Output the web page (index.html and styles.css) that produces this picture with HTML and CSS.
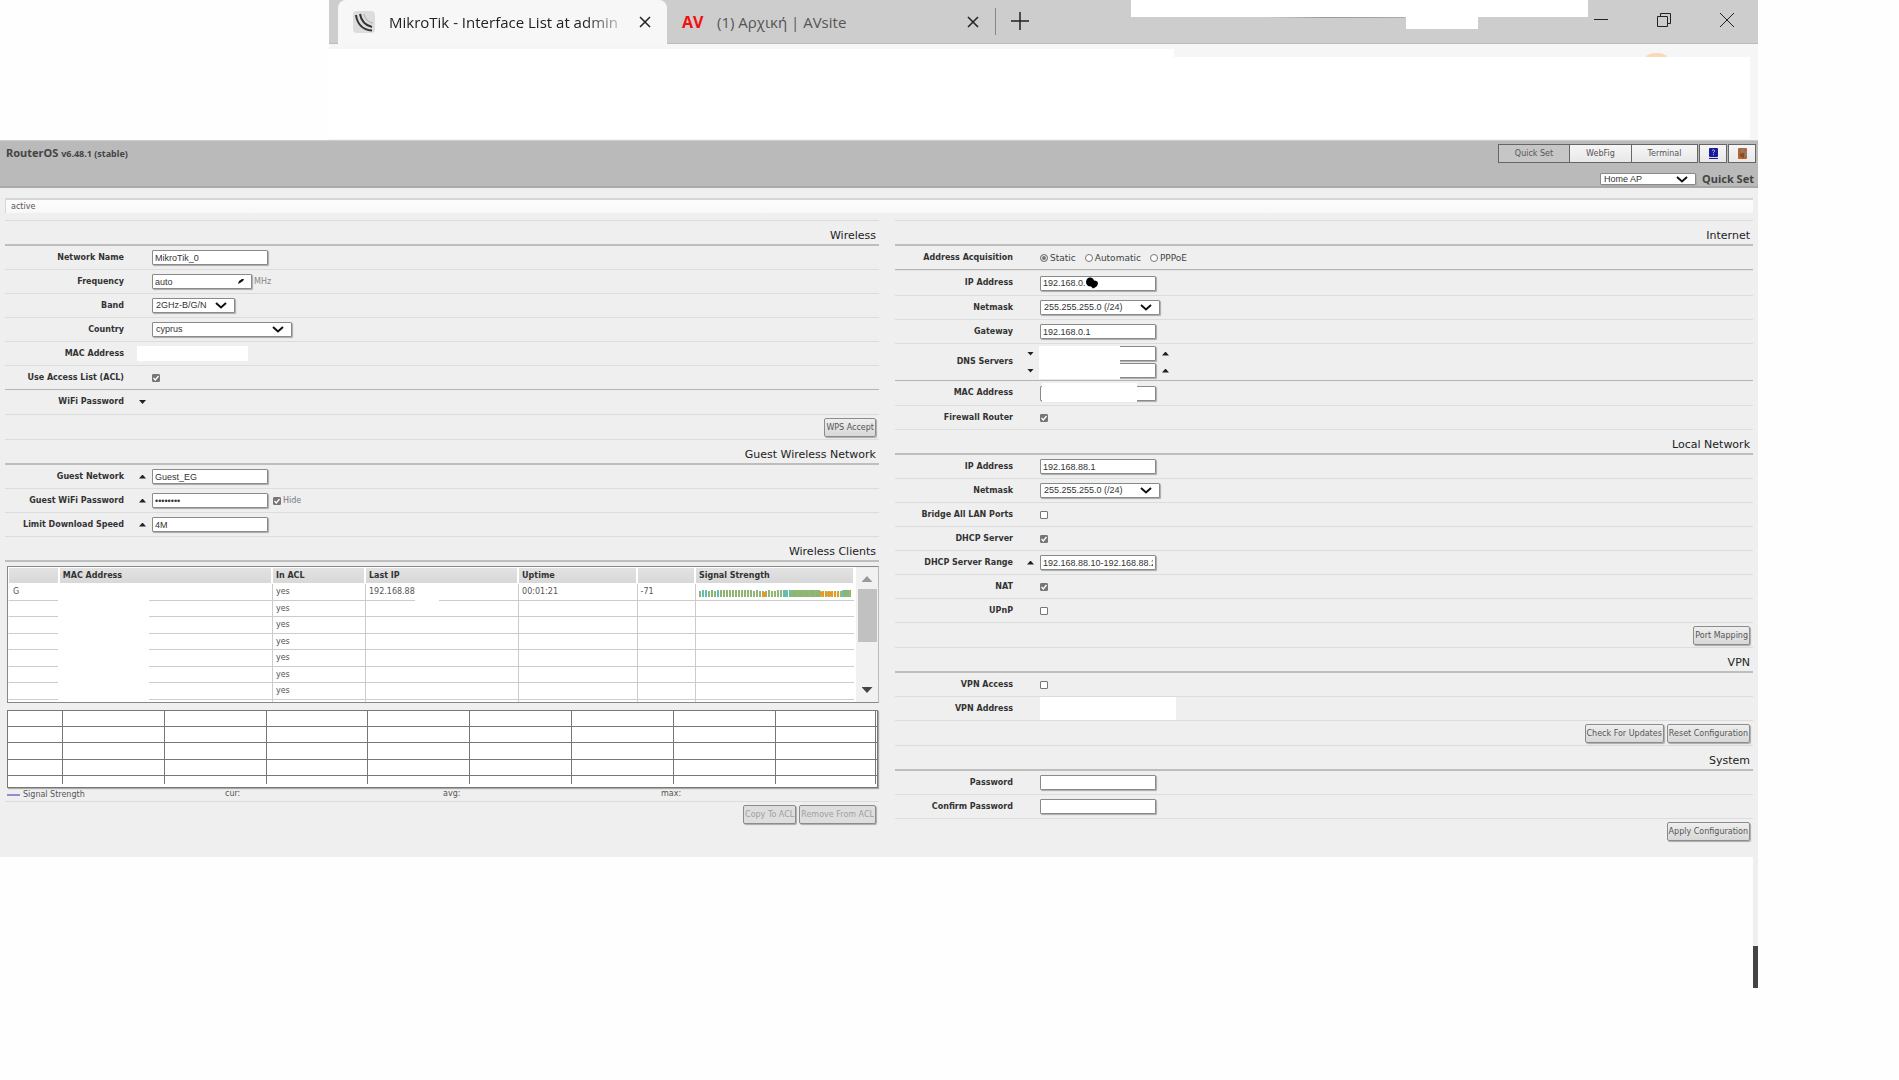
FILE: index.html
```html
<!DOCTYPE html>
<html lang="en">
<head>
<meta charset="utf-8">
<title>MikroTik - Interface List</title>
<link rel="stylesheet" href="styles.css">
</head>
<body>
<div class="window">
  <header class="titlebar">
    <div class="tab tab-active">
      <svg class="favicon" viewBox="0 0 22 22" aria-hidden="true"><rect width="22" height="22" rx="4" fill="#dcdcdc"/><path d="M3 4C4 12 9 19 19 19.500M7 3C8 9 11 14 19 16" fill="none" stroke="#333" stroke-width="2"/><path d="M11 3C12 8 15 11 20 12" fill="none" stroke="#aaa" stroke-width="1"/></svg>
      <span class="tab-title tab-fade">MikroTik - Interface List at admin</span>
      <button class="icon-button" aria-label="Close tab"><svg viewBox="0 0 12 12" class="cross"><path d="M1 1L11 11M11 1L1 11"/></svg></button>
    </div>
    <div class="tab tab-second">
      <span class="av-logo">AV</span>
      <span class="tab-title">(1) Αρχική | AVsite</span>
      <button class="icon-button" aria-label="Close tab"><svg viewBox="0 0 12 12" class="cross"><path d="M1 1L11 11M11 1L1 11"/></svg></button>
    </div>
    <button class="icon-button new-tab" aria-label="New tab"><svg viewBox="0 0 18 18" class="plus"><path d="M9 0V18M0 9H18"/></svg></button>
    <div class="window-controls">
      <button class="icon-button" aria-label="Minimize"><svg viewBox="0 0 14 14" class="control"><path d="M0 6.5H14"/></svg></button>
      <button class="icon-button" aria-label="Restore"><svg viewBox="0 0 14 14" class="control"><path d="M.5 3.5H10.500V13.500H.5ZM3.500 3.500V.5H13.500V10.500H10.500"/></svg></button>
      <button class="icon-button" aria-label="Close"><svg viewBox="0 0 14 14" class="control"><path d="M0 0L14 14M14 0L0 14"/></svg></button>
    </div>
    <div class="mask mask-title"></div>
    <div class="mask mask-title-small"></div>
  </header>
  <div class="toolbar">
    <div class="toolbar-blank"></div>
    <div class="toolbar-low"></div>
    <div class="profile-dot"></div>
  </div>

  <div class="app">
    <header class="app-header">
      <h1 class="brand">RouterOS <span class="version">v6.48.1 (stable)</span></h1>
      <div class="header-side">
        <nav class="nav">
          <button class="nav-button nav-current">Quick Set</button>
          <button class="nav-button nav-webfig">WebFig</button>
          <button class="nav-button nav-terminal">Terminal</button>
          <button class="nav-icon" aria-label="Manual"><svg viewBox="0 0 11 11" class="nav-svg"><rect x="1" width="9" height="9" rx="1" fill="#1a1a9c"/><rect x="1" y="9" width="9" height="1" fill="#ddd"/><rect x="1" y="10" width="9" height="1" fill="#1a1a9c"/><path d="M4 2.500Q5.500 1 6.500 2.500Q7 3.500 5.500 4.500V5.200M5.500 6.300V7.200" fill="none" stroke="#ccd" stroke-width="1"/></svg></button>
          <button class="nav-icon" aria-label="Log out"><svg viewBox="0 0 11 11" class="nav-svg"><rect x="1" width="9" height="11" rx="1" fill="#b5652f"/><path d="M4 1H7V4H4ZM8 3H10V8H8Z" fill="#7a8288"/><path d="M2 6L7 5V10L4 9" fill="#8d4a20"/></svg></button>
        </nav>
        <div class="mode">
          <select class="select select-mode" aria-label="Mode"><option>Home AP</option></select>
          <span class="mode-title">Quick Set</span>
        </div>
      </div>
    </header>

    <div class="status">active</div>

    <main class="columns">
      <div class="column column-left">
        <section>
          <h2 class="heading">Wireless</h2>
          <div class="row"><label class="label" for="name">Network Name</label><span class="slot"></span><div class="field"><input class="input" id="name" value="MikroTik_0"></div></div>
          <div class="row"><label class="label" for="freq">Frequency</label><span class="slot"></span><div class="field"><span class="over"><input class="input input-freq" id="freq" value="auto"><svg class="scribble" viewBox="0 0 6 5"><path d="M0 5L1 2L4 0H6L5 2L2 4Z"/></svg></span><span class="unit">MHz</span></div></div>
          <div class="row"><label class="label" for="band">Band</label><span class="slot"></span><div class="field"><select class="select select-band" id="band"><option>2GHz-B/G/N</option></select></div></div>
          <div class="row"><label class="label" for="country">Country</label><span class="slot"></span><div class="field"><select class="select select-country" id="country"><option>cyprus</option></select></div></div>
          <div class="row"><span class="label">MAC Address</span><div class="blank-mac"></div></div>
          <div class="row row-divider"><label class="label" for="acl">Use Access List (ACL)</label><span class="slot"></span><div class="field"><input type="checkbox" class="check" id="acl" checked></div></div>
          <div class="row row-tall"><span class="label">WiFi Password</span><button class="slot arrow-down" aria-label="Expand"></button></div>
          <div class="actions"><button class="button">WPS Accept</button></div>
        </section>
        <section>
          <h2 class="heading">Guest Wireless Network</h2>
          <div class="row"><label class="label" for="guest">Guest Network</label><button class="slot arrow-up" aria-label="Collapse"></button><div class="field"><input class="input" id="guest" value="Guest_EG"></div></div>
          <div class="row"><label class="label" for="gpass">Guest WiFi Password</label><button class="slot arrow-up" aria-label="Collapse"></button><div class="field"><input class="input" id="gpass" type="password" value="password"><label class="hide"><input type="checkbox" class="check" checked>Hide</label></div></div>
          <div class="row"><label class="label" for="limit">Limit Download Speed</label><button class="slot arrow-up" aria-label="Collapse"></button><div class="field"><input class="input" id="limit" value="4M"></div></div>
        </section>
        <section>
          <h2 class="heading">Wireless Clients</h2>
          <div class="clients">
            <table class="table">
              <colgroup><col class="c-flag"><col class="c-mac"><col class="c-acl"><col class="c-ip"><col class="c-up"><col class="c-dbm"><col class="c-sig"></colgroup>
              <thead><tr><th></th><th>MAC Address</th><th>In ACL</th><th>Last IP</th><th>Uptime</th><th></th><th>Signal Strength</th></tr></thead>
              <tbody>
                <tr><td>G</td><td class="masked"></td><td>yes</td><td class="ip">192.168.88</td><td>00:01:21</td><td>-71</td><td><svg class="signal" viewBox="0 0 152 7" preserveAspectRatio="none"><path d="M0 3.500H152" stroke="#8fb573" stroke-width="7" stroke-dasharray="2 1"/><path d="M92 3.500H121M145 3.500H152" stroke="#8fb573" stroke-width="7" stroke-dasharray="5 1"/><path d="M3 3.500H5M6 3.500H8M18 3.500H20M84 3.500H88M90 3.500H92M143 3.500H145" stroke="#5cc0b4" stroke-width="7"/><path d="M0 .5H2M9 .5H11M15 .5H17M54 .5H56M60 .5H68M72 .5H77M139 .5H143M121 .5H139" stroke="#fff" stroke-width="1"/><path d="M63 4.500H67M121 4H125M126 4.500H127M128 4H134M135 4H137M138 4.500H140" stroke="#ea9a22" stroke-width="5"/></svg></td></tr>
                <tr><td></td><td class="masked"></td><td>yes</td><td></td><td></td><td></td><td></td></tr>
                <tr><td></td><td class="masked"></td><td>yes</td><td></td><td></td><td></td><td></td></tr>
                <tr><td></td><td class="masked"></td><td>yes</td><td></td><td></td><td></td><td></td></tr>
                <tr><td></td><td class="masked"></td><td>yes</td><td></td><td></td><td></td><td></td></tr>
                <tr><td></td><td class="masked"></td><td>yes</td><td></td><td></td><td></td><td></td></tr>
                <tr><td></td><td class="masked"></td><td>yes</td><td></td><td></td><td></td><td></td></tr>
                <tr><td></td><td class="masked"></td><td></td><td></td><td></td><td></td><td></td></tr>
              </tbody>
            </table>
            <div class="scrollbar"><span class="scroll-up"></span><span class="thumb"></span><span class="scroll-down"></span></div>
          </div>
          <svg class="graph" aria-hidden="true">
            <g stroke="#777" stroke-width="1" shape-rendering="crispEdges">
              <path d="M0 15.500H3000M0 31.500H3000M0 48.500H3000M0 64.500H3000"/>
              <line x1="6.3%" x2="6.3%" y1="0" y2="73"/><line x1="18%" x2="18%" y1="0" y2="73"/><line x1="29.700%" x2="29.700%" y1="0" y2="73"/><line x1="41.400%" x2="41.400%" y1="0" y2="73"/><line x1="53.100%" x2="53.100%" y1="0" y2="73"/><line x1="64.800%" x2="64.800%" y1="0" y2="73"/><line x1="76.600%" x2="76.600%" y1="0" y2="73"/><line x1="88.300%" x2="88.300%" y1="0" y2="73"/><line x1="99.800%" x2="99.800%" y1="0" y2="73"/>
            </g>
          </svg>
          <div class="legend"><span class="legend-name"><i class="legend-line"></i>Signal Strength</span><span>cur:</span><span>avg:</span><span>max:</span></div>
          <div class="actions actions-plain"><button class="button" disabled>Copy To ACL</button><button class="button" disabled>Remove From ACL</button></div>
        </section>
      </div>

      <div class="column column-right">
        <section>
          <h2 class="heading">Internet</h2>
          <div class="row row-divider"><span class="label">Address Acquisition</span><span class="slot"></span><div class="field radios"><label class="radio-label"><input type="radio" class="radio" name="acq" checked>Static</label><label class="radio-label"><input type="radio" class="radio" name="acq">Automatic</label><label class="radio-label"><input type="radio" class="radio" name="acq">PPPoE</label></div></div>
          <div class="row row-first"><label class="label" for="wanip">IP Address</label><span class="slot"></span><div class="field"><span class="over"><input class="input" id="wanip" value="192.168.0."><svg class="blob" viewBox="0 0 12 11"><path d="M0 4Q1 0 4 0Q7 0 8 3Q12 3 12 6Q12 8 9 10L7 11L5 9Q0 9 0 4Z"/></svg></span></div></div>
          <div class="row"><label class="label" for="wanmask">Netmask</label><span class="slot"></span><div class="field"><select class="select select-mask" id="wanmask"><option>255.255.255.0 (/24)</option></select></div></div>
          <div class="row"><label class="label" for="gw">Gateway</label><span class="slot"></span><div class="field"><input class="input" id="gw" value="192.168.0.1"></div></div>
          <div class="row row-dns row-divider"><span class="label">DNS Servers</span>
            <div class="slots"><button class="slot arrow-down" aria-label="Remove"></button><button class="slot arrow-down" aria-label="Remove"></button></div>
            <div class="field"><div class="over dns"><input class="input" aria-label="DNS server 1"><input class="input" aria-label="DNS server 2"><div class="mask mask-dns"></div></div>
            <div class="slots slots-end"><button class="arrow-up" aria-label="Add"></button><button class="arrow-up" aria-label="Add"></button></div></div></div>
          <div class="row row-tall"><label class="label" for="wanmac">MAC Address</label><span class="slot"></span><div class="field"><span class="over"><input class="input" id="wanmac"><span class="mask mask-mac"></span></span></div></div>
          <div class="row"><label class="label" for="fw">Firewall Router</label><span class="slot"></span><div class="field"><input type="checkbox" class="check" id="fw" checked></div></div>
        </section>
        <section>
          <h2 class="heading">Local Network</h2>
          <div class="row"><label class="label" for="lanip">IP Address</label><span class="slot"></span><div class="field"><input class="input" id="lanip" value="192.168.88.1"></div></div>
          <div class="row"><label class="label" for="lanmask">Netmask</label><span class="slot"></span><div class="field"><select class="select select-mask" id="lanmask"><option>255.255.255.0 (/24)</option></select></div></div>
          <div class="row"><label class="label" for="bridge">Bridge All LAN Ports</label><span class="slot"></span><div class="field"><input type="checkbox" class="check" id="bridge"></div></div>
          <div class="row"><label class="label" for="dhcp">DHCP Server</label><span class="slot"></span><div class="field"><input type="checkbox" class="check" id="dhcp" checked></div></div>
          <div class="row"><label class="label" for="range">DHCP Server Range</label><button class="slot arrow-up" aria-label="Collapse"></button><div class="field"><input class="input" id="range" value="192.168.88.10-192.168.88.254"></div></div>
          <div class="row"><label class="label" for="nat">NAT</label><span class="slot"></span><div class="field"><input type="checkbox" class="check" id="nat" checked></div></div>
          <div class="row"><label class="label" for="upnp">UPnP</label><span class="slot"></span><div class="field"><input type="checkbox" class="check" id="upnp"></div></div>
          <div class="actions"><button class="button">Port Mapping</button></div>
        </section>
        <section>
          <h2 class="heading">VPN</h2>
          <div class="row"><label class="label" for="vpn">VPN Access</label><span class="slot"></span><div class="field"><input type="checkbox" class="check" id="vpn"></div></div>
          <div class="row"><span class="label">VPN Address</span><span class="slot"></span><div class="blank-vpn"></div></div>
          <div class="actions"><button class="button">Check For Updates</button><button class="button">Reset Configuration</button></div>
        </section>
        <section>
          <h2 class="heading">System</h2>
          <div class="row"><label class="label" for="pw">Password</label><span class="slot"></span><div class="field"><input type="password" class="input" id="pw"></div></div>
          <div class="row"><label class="label" for="pw2">Confirm Password</label><span class="slot"></span><div class="field"><input type="password" class="input" id="pw2"></div></div>
          <div class="actions actions-last"><button class="button">Apply Configuration</button></div>
        </section>
      </div>
    </main>
  </div>
  <footer class="below"><div class="rail"></div><div class="rail-dark"></div></footer>
</div>
</body>
</html>
```
FILE: styles.css
```css
* { box-sizing: border-box; }

body {
  margin: 0;
  background: #fefefe;
  color: #555;
  font: 8px/12px "DejaVu Sans", Verdana, sans-serif;
}

button, input, select { margin: 0; font-family: inherit; color: inherit; }

.window { margin-right: 141px; }

/* Browser frame */
.titlebar {
  position: relative;
  display: flex;
  height: 44px;
  margin-left: 329px;
  padding-left: 9px;
  background: #cdcdcd;
  border-bottom: 1px solid #bcbcbc;
}

.tab {
  display: flex;
  align-items: center;
  font: 15px/24px "Open Sans", "Noto Sans", sans-serif;
}

.tab-active {
  width: 329px;
  height: 44px;
  padding: 0 10px 0 15px;
  background: #f7f7f7;
  border-radius: 8px 8px 0 0;
  color: #222;
}

.tab-second {
  width: 329px;
  padding: 0 10px 0 15px;
  border-right: 1px solid #888;
  margin: 8px 0;
}

.tab-title { flex: 1; min-width: 0; white-space: nowrap; }
.tab-fade {
  -webkit-mask-image: linear-gradient(90deg, #000 80%, transparent);
  mask-image: linear-gradient(90deg, #000 80%, transparent);
}

.favicon { width: 22px; height: 22px; margin-right: 14px; }
.av-logo { width: 35px; color: #f01010; font: bold 16px/24px "Open Sans", sans-serif; }

.icon-button {
  display: grid;
  place-items: center;
  width: 24px;
  height: 24px;
  padding: 0;
  border: 0;
  background: none;
  color: #222;
}
.icon-button svg { fill: none; stroke: currentColor; stroke-width: 1; }
.icon-button .cross { width: 12px; height: 12px; stroke-width: 1.5; }
.icon-button .plus { width: 18px; height: 18px; stroke-width: 1.5; }
.icon-button .control { width: 14px; height: 14px; }
.new-tab { margin: 9px 12px; }
.window-controls { display: flex; gap: 39px; margin: 8px 19px 0 auto; }

.mask { position: absolute; background: #fff; }
.mask-title { top: 0; right: 170px; width: 457px; height: 17px; }
.mask-title::after {
  content: "";
  position: absolute;
  top: 100%;
  left: 30%;
  width: 30%;
  height: 1px;
  background: linear-gradient(90deg, #cdcdcd, #999 40%, #aaa);
}
.mask-title-small { top: 0; right: 280px; width: 72px; height: 29px; }

.toolbar {
  position: relative;
  display: flex;
  height: 96px;
  margin-left: 329px;
  padding: 5px 8px 1px 0;
  background: #f6f6f6;
}
.toolbar-blank { width: 59.5%; background: #fff; }
.toolbar-low { flex: 1; margin-top: 8px; background: #fff; }
.profile-dot {
  position: absolute;
  top: 9px;
  right: 91px;
  width: 21px;
  height: 4px;
  border-radius: 50% 50% 0 0 / 100% 100% 0 0;
  background: #fad9b8;
}

/* Router page */
.app { background: #efefef; }

.app-header {
  display: flex;
  justify-content: space-between;
  height: 48px;
  padding: 3px 2px 0 6px;
  background: #bababa;
  border-top: 1px solid #ccc;
  border-bottom: 2px solid #a9a9a9;
}
.brand { margin: 0; font: bold 11px/18px "Noto Sans", sans-serif; color: #444; }
.version { font-size: 9px; }

.header-side { display: flex; flex-direction: column; align-items: flex-end; gap: 9px; }
.nav { display: flex; }
.nav-button, .nav-icon {
  height: 19px;
  padding: 0;
  border: 1px solid #666;
  background: linear-gradient(#f6f6f6, #e8e8e8);
  font-size: 8px;
}
.nav-button { width: 67px; margin-left: -1px; }
.nav-current { width: 72px; background: #c6c6c6; }
.nav-webfig { width: 63px; }
.nav-icon { display: grid; place-items: center; width: 28px; margin-left: 1px; }
.nav-svg { width: 11px; height: 11px; }

.mode { display: flex; align-items: center; gap: 6px; height: 14px; padding-right: 2px; }
.mode-title { font: bold 11px/14px "Noto Sans", sans-serif; color: #444; }

.status {
  height: 15px;
  margin: 10px 5px 7px;
  padding-left: 5px;
  background: linear-gradient(#fdfdfd, #f7f7f7);
  border-top: 2px solid #d6d6d6;
  border-left: 1px solid #d6d6d6;
  line-height: 14px;
}

.columns {
  display: grid;
  grid-template-columns: 874fr 858fr;
  gap: 16px;
  padding: 0 5px;
}
.column { border-top: 1px solid #dcdcdc; min-width: 0; }

.heading {
  height: 25px;
  margin: 0;
  padding: 0 3px;
  border-bottom: 2px solid #bebebe;
  color: #222;
  font-size: 11px;
  font-weight: normal;
  line-height: 30px;
  text-align: right;
}

.row {
  display: grid;
  grid-template-columns: 119px 28px 1fr;
  align-items: center;
  height: 24px;
  border-bottom: 1px solid #dcdcdc;
}
.column-right .row { grid-template-columns: 118px 27px 1fr; }
.row-divider { border-color: #b4b4b4; }
.row-tall { height: 25px; }
.row-first { height: 26px; border-top: 1px solid #e4e4e4; }
.row-dns { height: 37px; }
.label { font-weight: bold; color: #333; text-align: right; white-space: nowrap; }
.field { display: flex; align-items: center; }
.over { position: relative; display: flex; }

.input, .select {
  width: 116px;
  height: 15px;
  padding: 0 2px;
  border: 1px solid #8a8a8a;
  border-radius: 1px;
  background-color: #fff;
  box-shadow: 1px 1px 1px #aaa;
  color: #333;
  font: 9px/13px "Liberation Sans", Arial, sans-serif;
}
.input-freq { width: 100px; }
.select {
  appearance: none;
  padding: 0 3px;
  background-image: url("data:image/svg+xml,%3Csvg xmlns='http://www.w3.org/2000/svg' width='12' height='7'%3E%3Cpath d='M1 1L6 5.5L11 1' fill='none' stroke='%23111' stroke-width='2'/%3E%3C/svg%3E");
  background-repeat: no-repeat;
  background-position: right 7px center;
}
.select-mode { width: 96px; height: 12px; line-height: 10px; }
.select-band { width: 83px; }
.select-country { width: 140px; }
.select-mask { width: 120px; }

.scribble { position: absolute; right: 8px; top: 5px; width: 6px; height: 5px; fill: #111; }
.blob { position: absolute; left: 46px; top: 1px; width: 12px; height: 12px; fill: #000; }
.unit { padding-left: 2px; color: #888; }
.hide { display: flex; align-items: center; gap: 2px; padding-left: 5px; color: #777; }

.check, .radio {
  appearance: none;
  width: 8px;
  height: 8px;
  border: 1px solid #767676;
  border-radius: 1px;
  background: #fff;
}
.check:checked {
  background: #767676 url("data:image/svg+xml,%3Csvg xmlns='http://www.w3.org/2000/svg' viewBox='0 0 6 6'%3E%3Cpath d='M.5 3L2.300 5L5.500 1' fill='none' stroke='white' stroke-width='1.3'/%3E%3C/svg%3E");
}
.radio { border-radius: 50%; }
.radio:checked { background: #767676; box-shadow: inset 0 0 0 1px #fff; }
.radios { gap: 9px; }
.radio-label { display: flex; align-items: center; gap: 2px; color: #444; font-size: 9px; }

/* Small triangles beside optional fields */
.arrow-up, .arrow-down {
  display: flex;
  justify-content: flex-end;
  height: 12px;
  padding: 4px 6px 0 0;
  border: 0;
  background: none;
}
.arrow-up::before, .arrow-down::before {
  content: "";
  width: 7px;
  height: 4px;
  background: #222;
  clip-path: polygon(50% 0, 100% 100%, 0 100%);
}
.arrow-down::before { clip-path: polygon(0 0, 100% 0, 50% 100%); }

.dns { flex-direction: column; gap: 2px; }
.slots { display: flex; flex-direction: column; gap: 5px; }
.slots-end { padding-left: 6px; }
.mask-dns { top: 0; left: -1px; width: 81px; height: 33px; }
.mask-mac { top: -3px; left: 2px; width: 95px; height: 19px; }

.blank-mac { grid-column: 2 / 4; width: 111px; height: 15px; margin-left: 13px; background: #fff; }
.blank-vpn { width: 136px; height: 23px; background: #fff; }

.actions {
  display: flex;
  justify-content: flex-end;
  align-items: center;
  gap: 3px;
  height: 25px;
  padding-right: 3px;
  border-bottom: 1px solid #dcdcdc;
}
.button {
  height: 19px;
  padding: 0 1px;
  border: 1px solid #8c8c8c;
  border-radius: 2px;
  background: linear-gradient(#eee, #d8d8d8);
  box-shadow: 1px 1px 1px #aaa;
  color: #555;
  font-size: 8px;
  white-space: nowrap;
}
.button:disabled { color: #a0a0a0; background: #dedede; }
.actions-plain { border: 0; }
.actions-last { height: 38px; padding-bottom: 13px; border: 0; }

/* Client list */
.clients {
  display: flex;
  height: 137px;
  margin: 4px 0 0 2px;
  overflow: hidden;
  background: #fff;
  border: 1px solid #888;
  border-right-color: #bbb;
}
.table { flex: 1; border-spacing: 0; table-layout: fixed; width: 0; margin-right: 2px; }
.c-flag { width: 6%; }
.c-mac { width: 25.2%; }
.c-acl { width: 11%; }
.c-ip { width: 18.1%; }
.c-up { width: 14%; }
.c-dbm { width: 6.9%; }
.c-sig { width: 18.8%; }
.table th, .table td { position: relative; padding: 0 3px; text-align: left; line-height: 12px; }
.table th {
  height: 17px;
  background: linear-gradient(#e2e2e2, #d8d8d8);
  border: 1px solid #fff;
  color: #333;
}
.table td { height: 16px; border-bottom: 1px solid #ccc; border-left: 1px solid #ccc; }
.table td:first-child, .table .masked { border-left-color: #fff; }
.table td:first-child { padding-left: 4px; }
.table tr:nth-child(odd) td { height: 17px; }
.masked::before {
  content: "";
  position: absolute;
  inset: 0 auto -1px -2px;
  width: 91px;
  background: #fff;
}
.ip::after {
  content: "";
  position: absolute;
  left: 49px;
  bottom: -1px;
  width: 24px;
  height: 8px;
  background: #fff;
}
.signal { display: block; width: 100%; height: 7px; margin-top: 3px; }

.scrollbar {
  display: flex;
  flex-direction: column;
  align-items: center;
  width: 22px;
  padding: 9px 2px;
  background: #f1f1f1;
}
.scroll-up, .scroll-down { width: 11px; height: 6px; background: #999; clip-path: polygon(50% 0, 100% 100%, 0 100%); }
.scroll-down { margin-top: auto; background: #444; clip-path: polygon(0 0, 100% 0, 50% 100%); }
.thumb { width: 19px; height: 53px; margin-top: 7px; background: #c1c1c1; }

.graph {
  display: block;
  width: calc(100% - 3px);
  height: 78px;
  margin: 7px 1px 0 2px;
  background: #fff;
  border: 1px solid #777;
  box-shadow: 1px 1px 1px #aaa;
}
.legend {
  display: grid;
  grid-template-columns: 25% 25% 25% 25%;
  height: 14px;
  padding-left: 2px;
  border-bottom: 1px solid #dcdcdc;
}
.legend-name { display: flex; align-items: center; gap: 3px; }
.legend-line { width: 13px; height: 2px; background: #8f8fd0; }

/* Page edge under the panel */
.below { display: flex; flex-direction: column; align-items: flex-end; }
.rail { width: 5px; height: 89px; background: #efefef; }
.rail-dark { width: 5px; height: 42px; background: #444; }
```
